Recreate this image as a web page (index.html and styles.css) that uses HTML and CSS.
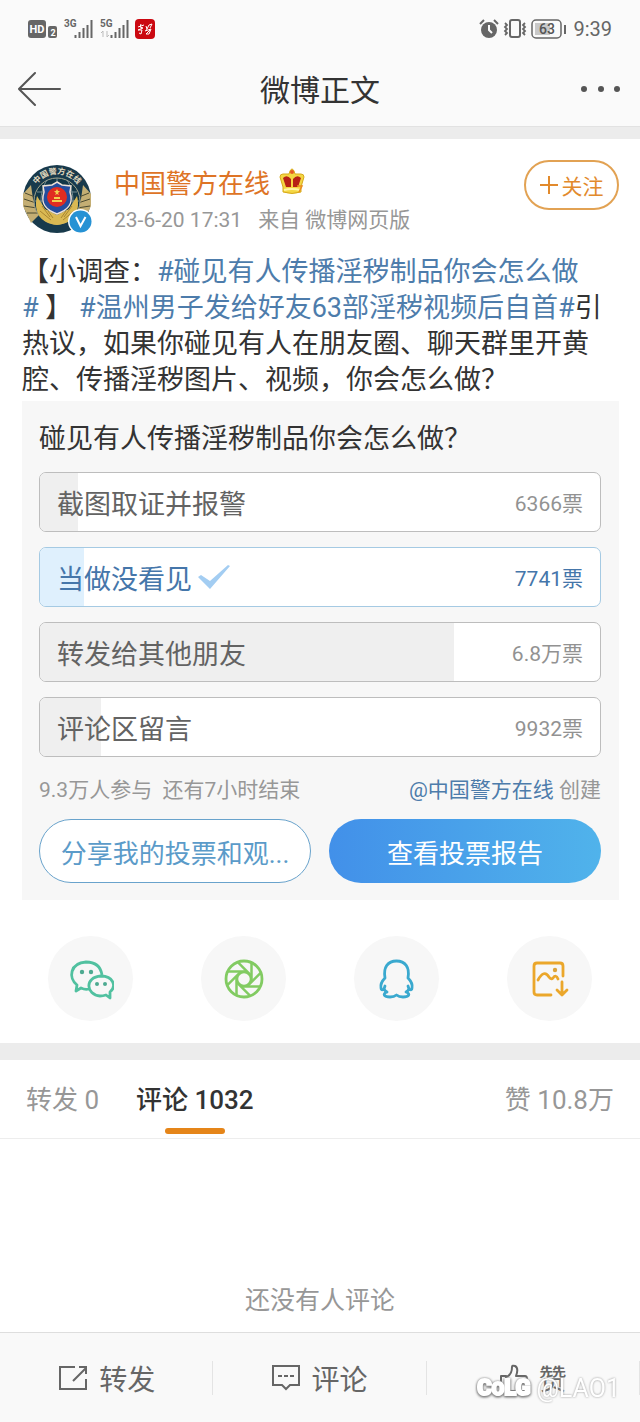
FILE: index.html
```html
<!DOCTYPE html>
<html lang="zh-CN">
<head>
<meta charset="utf-8">
<meta name="viewport" content="width=device-width, initial-scale=1">
<title>微博正文</title>
<link rel="stylesheet" href="styles.css">
</head>
<body>
<div class="page">
  <header class="top">
    <div class="status">
      <svg class="status-left" width="130" height="24" viewBox="0 0 130 24" aria-hidden="true">
        <rect x="0" y="3" width="18" height="18" rx="3" fill="#666"/>
        <text x="9" y="16" class="hd">HD</text>
        <rect x="20" y="9" width="9" height="12" rx="2" fill="#666"/>
        <text x="25" y="19" class="sim">2</text>
        <text x="36" y="10" class="net">3G</text>
        <path d="M47.500 21v-3M51.500 21v-6M55.500 21v-10M59.500 21v-13M63.500 21V3" class="bars"/>
        <text x="72" y="10" class="net">5G</text>
        <path d="M75 20v-6l-2 2M79 14v6l2-2" fill="none" stroke="#bbb"/>
        <path d="M83.500 21v-3M87.500 21v-6M91.500 21v-10M95.500 21v-13M99.500 21V3" class="bars"/>
        <rect x="107" y="2" width="20" height="20" rx="4" fill="#cb0811"/>
        <path d="M110 10l6-2M113 7l-1 3 3 1-5 2 4 0-1 4-2-1M118 9l1 3M121 8l-3 6M121 8l3-1-2 4M117 14l6-2-2 5-3 0 4-4" fill="none" stroke="#fff" stroke-width="1"/>
      </svg>
      <div class="status-right">
        <svg width="20" height="20" viewBox="0 0 20 20" aria-hidden="true">
          <circle cx="10" cy="11" r="8" fill="#666"/>
          <path d="M1 5l4-4M19 5l-4-4" stroke="#666" stroke-width="2"/>
          <path d="M10 6v5l3 3" fill="none" stroke="#fafafa" stroke-width="2"/>
        </svg>
        <svg width="24" height="20" viewBox="0 0 24 20" fill="none" stroke="#666" aria-hidden="true">
          <rect x="7" y="1" width="10" height="17" rx="2" stroke-width="2"/>
          <path d="M2 4l2 2-2 2 2 2-2 2 2 2-2 2M22 4l-2 2 2 2-2 2 2 2-2 2 2 2" stroke-width="1.800"/>
        </svg>
        <svg width="36" height="20" viewBox="0 0 36 20" aria-hidden="true">
          <rect x="1" y="1" width="29" height="18" rx="4" fill="none" stroke="#666" stroke-width="1.500"/>
          <rect x="4" y="4" width="15" height="12" fill="#c8c8c8"/>
          <path d="M34 6v9" stroke="#666" stroke-width="2"/>
          <text x="16" y="15" class="battery">63</text>
        </svg>
        <span class="clock">9:39</span>
      </div>
    </div>
    <div class="navbar">
      <button class="icon-btn" aria-label="返回">
        <svg width="44" height="36" viewBox="0 0 44 36" fill="none" stroke="#555" stroke-width="2" stroke-linecap="round"><path d="M1 18H42M17 2L1 18l16 16"/></svg>
      </button>
      <h1 class="title">微博正文</h1>
      <button class="icon-btn nav-end" aria-label="更多">
        <svg width="44" height="36" viewBox="0 0 44 36" fill="#555"><circle cx="6" cy="18" r="3"/><circle cx="23" cy="18" r="3"/><circle cx="39" cy="18" r="3"/></svg>
      </button>
    </div>
  </header>

  <main class="content">
    <article class="post">
      <div class="author">
        <svg class="avatar" width="72" height="72" viewBox="0 0 72 72" role="img" aria-label="中国警方在线">
          <defs><path id="rim" d="M10 35a25 25 0 0 1 50 0"/></defs>
          <circle cx="35" cy="35" r="34" fill="#183a4c"/>
          <path d="M9 21L1 30v12l8 17 8-8-6-16zM61 21l8 9v12l-8 17-8-8 6-16z" fill="#c4ae73"/>
          <path d="M2 35l12 4M2 42l13 2M5 49l12 0M3 29l10 4M68 35l-12 4M68 42l-13 2M65 49l-12 0M67 29l-10 4" stroke="#4b4a30" stroke-width="1"/>
          <circle cx="35" cy="37" r="23" fill="#123747" stroke="#a4a58c"/>
          <path d="M13 37h44M15 28h40M15 47h40M35 14v46M25 16c-8 12-8 30 0 42M45 16c8 12 8 30 0 42" fill="none" stroke="#8ba0a3" stroke-width=".8"/>
          <text class="rim"><textPath href="#rim" startOffset="50%">中国警方在线</textPath></text>
          <path d="M15 32c-4 16 4 28 20 29 16-1 24-13 20-29l-8 13-12 6-12-6z" fill="#dab953"/>
          <path d="M20 42l8 11M18 47l11 9M50 42l-8 11M52 47l-11 9M26 47l5 7M44 47l-5 7" stroke="#a98531"/>
          <path d="M35 18l5 3 9 1-1 6c4 12-2 18-13 22-11-4-17-10-13-22l-1-6 9-1z" fill="#244d9e" stroke="#eee1d6" stroke-width="1.500"/>
          <circle cx="35" cy="33" r="10" fill="#e12c21"/>
          <path d="M35 25l1 2h2l-2 2 1 2-2-1-2 1 1-2-2-2h2zM30 36h10v2H30zM32 33h6v2h-6z" fill="#f3cf4d"/>
          <circle cx="58.500" cy="57.500" r="12.500" fill="#fff"/>
          <circle cx="58.500" cy="57.500" r="11" fill="#2692d4"/>
          <path d="M54 53l4.500 9 5-9" fill="none" stroke="#fff" stroke-width="2"/>
        </svg>
        <div class="who">
          <div class="name-row">
            <a class="name" href="#">中国警方在线</a>
            <svg width="26" height="27" viewBox="0 0 26 27" aria-hidden="true">
              <path d="M4 19L1 9q0-3 3-3l6 0 1-3q2-4 4 0l1 3 6 0q3 0 3 3l-3 10v5q-9 3-18 0z" fill="#f4d642" stroke="#d7a91b"/>
              <path d="M4 10q4-4 8 1v8H7zM22 10q-4-4-8 1v8h5z" fill="#b72115"/>
              <path d="M5 22q8-2 16 0" fill="none" stroke="#fff5a5" stroke-width="2"/>
              <circle cx="13" cy="4" r="2" fill="#e55924"/>
              <path d="M18 18h5l-3 6" fill="none" stroke="#eb8c20" stroke-width="1.500"/>
            </svg>
          </div>
          <div class="meta"><time>23-6-20 17:31</time><span>来自 微博网页版</span></div>
        </div>
        <button class="follow">
          <svg width="18" height="18" viewBox="0 0 18 18" stroke="#e28a2c" stroke-width="2" aria-hidden="true"><path d="M0 9h18M9 0v18"/></svg>
          关注
        </button>
      </div>

      <p class="text">【小调查：<a href="#">#碰见有人传播淫秽制品你会怎么做<br># </a>】 <a href="#">#温州男子发给好友63部淫秽视频后自首#</a>引<br>热议，如果你碰见有人在朋友圈、聊天群里开黄<br>腔、传播淫秽图片、视频，你会怎么做？</p>

      <section class="poll">
        <h2 class="question">碰见有人传播淫秽制品你会怎么做？</h2>
        <div class="options">
          <button class="option"><span class="fill" style="width:6.8%"></span><span class="label">截图取证并报警</span><span class="votes">6366票</span></button>
          <button class="option chosen"><span class="fill" style="width:7.800%"></span><span class="label">当做没看见
            <svg width="34" height="26" viewBox="0 0 34 26" aria-hidden="true"><path d="M1 13l3-2 9 6L31 1l2 1-20 23z" fill="#a3cdf2"/></svg></span><span class="votes">7741票</span></button>
          <button class="option"><span class="fill" style="width:74%"></span><span class="label">转发给其他朋友</span><span class="votes">6.8万票</span></button>
          <button class="option"><span class="fill" style="width:10.900%"></span><span class="label">评论区留言</span><span class="votes">9932票</span></button>
        </div>
        <div class="poll-info">
          <span>9.3万人参与&nbsp; 还有7小时结束</span>
          <span><a href="#">@中国警方在线</a> 创建</span>
        </div>
        <div class="actions">
          <button class="pill">分享我的投票和观...</button>
          <button class="pill primary">查看投票报告</button>
        </div>
      </section>

      <div class="share">
        <button class="round" aria-label="微信">
          <svg width="46" height="44" viewBox="0 0 46 44" fill="none" stroke="#51c1a0" stroke-width="2.800" stroke-linejoin="round">
            <path d="M21 32q-4 1-8-1l-5 3 1-6C0 21 2 6 18 5q14 0 16 13"/>
            <path d="M33 19c-17 1-15 19-1 20q3 0 6-1l4 3v-6c7-6 3-16-9-16z"/>
            <g fill="#4daa91" stroke="none"><circle cx="14" cy="15" r="2.200"/><circle cx="23" cy="15" r="2.200"/><circle cx="29" cy="27" r="2"/><circle cx="37" cy="27" r="2"/></g>
          </svg>
        </button>
        <button class="round" aria-label="朋友圈">
          <svg width="44" height="44" viewBox="0 0 44 44" fill="none" stroke="#82cb62" stroke-width="2.500">
            <circle cx="22" cy="22" r="18" stroke-width="2.800"/>
            <path id="blade" d="M29.500 6V24"/>
            <use href="#blade" transform="rotate(45 22 22)"/><use href="#blade" transform="rotate(90 22 22)"/><use href="#blade" transform="rotate(135 22 22)"/><use href="#blade" transform="rotate(180 22 22)"/><use href="#blade" transform="rotate(225 22 22)"/><use href="#blade" transform="rotate(270 22 22)"/><use href="#blade" transform="rotate(315 22 22)"/>
            <circle cx="22" cy="22" r="7"/>
          </svg>
        </button>
        <button class="round" aria-label="QQ">
          <svg width="44" height="44" viewBox="0 0 44 44" fill="none" stroke="#3aa9cf" stroke-width="2.800" stroke-linecap="round" stroke-linejoin="round">
            <path d="M9 32q-3 2-3-1-1-5 4-10C8 10 13 4 21.500 4S35 10 33 21q5 5 4 10 0 3-3 1M9 32l1-3M34 32l-1-3M9 32q1 2 3 3c-5 2-3 5 3 5q4 0 6.500-2 2.500 2 6.500 2c6 0 8-3 3-5q2-1 3-3"/>
          </svg>
        </button>
        <button class="round" aria-label="保存图片">
          <svg width="44" height="44" viewBox="0 0 44 44" fill="none" stroke="#eba72b" stroke-width="2.800" stroke-linecap="round" stroke-linejoin="round">
            <path d="M35 19V9q0-3-3-3H9Q6 6 6 9v26q0 3 3 3h14M10 23q6-11 11-3 2 3 4 1 3-4 5 1M34 25v13M29 33l5 5 5-5"/>
            <circle cx="27" cy="13" r="2.200" fill="#dca43c" stroke="none"/>
          </svg>
        </button>
      </div>
    </article>

    <nav class="tabs">
      <a class="tab" href="#">转发 0</a>
      <a class="tab active" href="#">评论 1032</a>
      <a class="tab likes" href="#">赞 10.8万</a>
    </nav>
    <section class="comments"><p class="empty">还没有人评论</p></section>
  </main>

  <footer class="toolbar">
    <button class="tool">
      <svg width="30" height="26" viewBox="0 0 30 26" fill="none" stroke="#666" stroke-width="2"><path d="M17 2H2v22h26V14M15 16L28 3M21 2h7v7"/></svg>
      转发
    </button>
    <button class="tool">
      <svg width="28" height="26" viewBox="0 0 28 26" fill="none" stroke="#666" stroke-width="2"><path d="M1 1h26v19h-9l-4 4-4-4H1zM6 11h4M12 11h4M18 11h4"/></svg>
      评论
    </button>
    <button class="tool">
      <svg width="28" height="28" viewBox="0 0 28 28" fill="none" stroke="#666" stroke-width="2" stroke-linejoin="round"><path d="M1 12h5v15H1zM6 13q6-2 6-10 0-2 3-1 4 2 1 10h9q2 0 2 3l-3 10q0 2-3 2H6"/></svg>
      赞
    </button>
    <div class="watermark"><b class="brand">C<small>O</small>LG</b><span>@LAO1</span></div>
  </footer>
</div>
</body>
</html>
```

FILE: styles.css
```css
* { box-sizing: border-box; }
body {
  margin: 0;
  background: #fff;
  color: #333;
  font-family: Roboto, "Noto Sans CJK SC", sans-serif;
  font-size: 27px;
}
h1, h2, p { margin: 0; font-weight: 400; }
a { color: inherit; text-decoration: none; }
button {
  margin: 0;
  padding: 0;
  border: 0;
  background: none;
  color: inherit;
  font: inherit;
  cursor: pointer;
}
svg { display: block; flex: none; }

.page { display: flex; flex-direction: column; min-height: 100vh; }

.top { background: #fafafa; border-bottom: 1px solid #e2e2e2; }
.status {
  display: flex;
  justify-content: space-between;
  align-items: center;
  height: 58px;
  padding: 0 28px;
}
.status-right { display: flex; align-items: center; gap: 4px; }
.clock { padding-left: 2px; font-size: 20px; color: #666; }
.hd { font: 700 11px Roboto, sans-serif; fill: #fff; text-anchor: middle; }
.sim { font: 700 9px Roboto, sans-serif; fill: #fff; text-anchor: middle; }
.net { font: 700 10px Roboto, sans-serif; fill: #666; }
.bars { fill: none; stroke: #666; stroke-width: 2px; }
.battery { font: 500 14px Roboto, sans-serif; fill: #555; text-anchor: middle; }
.navbar {
  display: grid;
  grid-template-columns: 1fr auto 1fr;
  align-items: center;
  height: 68px;
  padding: 0 18px 6px;
}
.icon-btn { justify-self: start; }
.nav-end { justify-self: end; }
.title { padding-top: 4px; font-size: 30px; line-height: 44px; }

.content { display: flex; flex-direction: column; flex: 1; border-top: 12px solid #ececec; }
.post { padding: 21px 21px 22px 22px; border-bottom: 17px solid #ececec; }
.author { display: flex; align-items: flex-start; }
.avatar { margin-top: 4px; }
.rim { font: 700 8px "Noto Sans CJK SC", sans-serif; fill: #e4dcc0; text-anchor: middle; }
.who { flex: 1; padding: 2px 0 0 20px; }
.name-row { display: flex; align-items: center; gap: 9px; height: 38px; }
.name { color: #de7426; font-size: 26px; }
.meta { display: flex; gap: 16px; color: #979797; font-size: 21px; line-height: 40px; }
.follow {
  display: flex;
  align-items: center;
  justify-content: center;
  gap: 4px;
  width: 95px;
  height: 50px;
  border: 2px solid #e2a253;
  border-radius: 25px;
  color: #e28a2c;
  font-size: 21px;
}

.text { margin-top: 14px; line-height: 36px; white-space: nowrap; }
.text a, .poll-info a { color: #4d7cab; }

.poll { margin-top: 3px; padding: 18px 18px 17px 17px; background: #f7f7f7; }
.question { font-size: 27px; line-height: 40px; }
.options { display: grid; gap: 15px; margin-top: 13px; }
.option {
  position: relative;
  display: flex;
  align-items: center;
  justify-content: space-between;
  height: 60px;
  padding: 0 17px;
  overflow: hidden;
  border: 1px solid #bdbdbd;
  border-radius: 7px;
  background: #fff;
  color: #636363;
}
.fill { position: absolute; top: 0; bottom: 0; left: 0; background: #efefef; }
.label, .votes { position: relative; }
.label { display: flex; align-items: center; gap: 5px; }
.votes { color: #929292; font-size: 21px; }
.chosen { border-color: #a5cae3; color: #4576aa; }
.chosen .fill { background: #dff0fd; }
.chosen .votes { color: #4576aa; }
.poll-info {
  display: flex;
  justify-content: space-between;
  margin-top: 17px;
  color: #979797;
  font-size: 21px;
  line-height: 32px;
}
.actions { display: grid; grid-template-columns: 1fr 1fr; gap: 18px; margin-top: 13px; }
.pill {
  height: 64px;
  border: 1px solid #69a3cc;
  border-radius: 32px;
  background: #fff;
  color: #5b9bc9;
  font-size: 26px;
  white-space: nowrap;
}
.primary { border: 0; background: linear-gradient(90deg, #4290e9, #50b3eb); color: #fff; }

.share { display: flex; justify-content: space-between; padding: 36px 27px 0 26px; }
.round {
  display: grid;
  place-items: center;
  width: 85px;
  height: 85px;
  border-radius: 50%;
  background: #f7f7f7;
}

.tabs {
  display: flex;
  gap: 37px;
  padding: 3px 26px 0;
  border-bottom: 1px solid #ededed;
  color: #979797;
  line-height: 75px;
  font-size: 26px;
}
.active { position: relative; color: #333; font-weight: 500; }
.active::after {
  content: "";
  position: absolute;
  bottom: 4px;
  left: 50%;
  width: 60px;
  height: 6px;
  margin-left: -30px;
  border-radius: 3px;
  background: #e58519;
}
.likes { margin-left: auto; }
.comments { display: flex; flex: 1; align-items: flex-end; justify-content: center; padding: 80px 0 13px; }
.empty { color: #979797; font-size: 25px; line-height: 36px; }

.toolbar {
  position: relative;
  display: grid;
  grid-template-columns: repeat(3, 1fr);
  height: 90px;
  border-top: 1px solid #dedede;
  background: #f9f9f9;
  color: #666;
  font-size: 28px;
}
.tool {
  display: flex;
  align-items: center;
  justify-content: center;
  gap: 11px;
  background: linear-gradient(#e4e4e4, #e4e4e4) right center / 1px 34px no-repeat;
}
.watermark {
  position: absolute;
  right: 20px;
  bottom: 16px;
  display: flex;
  align-items: center;
  gap: 6px;
  color: #fff;
  font-size: 25px;
  line-height: 34px;
  filter: drop-shadow(0 0 1px #999);
  pointer-events: none;
}
.brand {
  font: 900 22px/34px Roboto, sans-serif;
  -webkit-text-stroke: 2px #fff;
  filter: drop-shadow(0 1px 1px #777);
}
.brand small { font-size: 18px; }
```
